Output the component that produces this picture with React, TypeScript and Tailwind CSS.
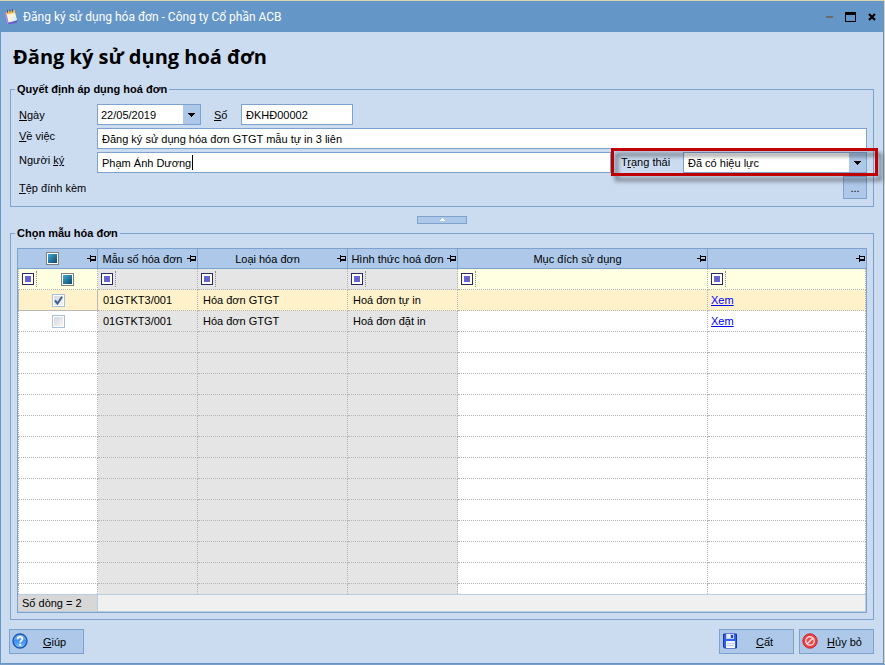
import { useState, type ReactNode } from "react";

const COLUMNS = [
  { title: "Mẫu số hóa đơn", width: "w-[100px]", readOnly: true },
  { title: "Loại hóa đơn", width: "w-[150px]", readOnly: true },
  { title: "Hình thức hoá đơn", width: "w-[110px]", readOnly: true },
  { title: "Mục đích sử dụng", width: "w-[250px]", readOnly: false },
  { title: "", width: "", readOnly: false },
];

const ROWS = [
  { code: "01GTKT3/001", type: "Hóa đơn GTGT", form: "Hoá đơn tự in", purpose: "" },
  { code: "01GTKT3/001", type: "Hóa đơn GTGT", form: "Hoá đơn đặt in", purpose: "" },
];

const EMPTY_ROWS = 12;

const FIELD = "h-[21px] border border-[#7da2ce] bg-white px-1 outline-none";
const CELL = "border-r border-b border-dotted border-[#b4b4b4]";

function AppIcon() {
  return (
    <svg width="16" height="16" viewBox="0 0 16 16" aria-hidden="true">
      <path d="M0 4l3-1.500 3 11L14 11l-1.500 3L3 15.500z" fill="#6a5fd0" />
      <path d="M0 4l2-.5 2.500 11-1.500 1z" fill="#9a92ea" />
      <path d="M2 3l8.500-1.500L13 11l-8.500 2.500z" fill="#fdf3d6" />
      <path d="M2 3l8.500-1.500.6 2.500-8.500 1.500z" fill="#f4c45c" />
      <path d="M7 8l4.500-1 1 4-4.500 1.500z" fill="#dff1fb" />
      <path d="M3.500 1v3M6 .6v3M8.500 .2v3" stroke="#5b5a57" strokeWidth="1" />
    </svg>
  );
}

function HelpIcon() {
  return (
    <svg width="16" height="16" viewBox="0 0 16 16" aria-hidden="true">
      <defs>
        <linearGradient id="help" x1="0" y1="0" x2="0" y2="1">
          <stop offset="0" stopColor="#8cc4fb" />
          <stop offset="0.5" stopColor="#3d8df0" />
          <stop offset="1" stopColor="#7cc2ff" />
        </linearGradient>
      </defs>
      <circle cx="8" cy="8" r="7" fill="url(#help)" stroke="#1c56a8" strokeWidth="1.3" />
      <path d="M5.600 6.200C5.600 3 10.600 3.200 10.400 6.100C10.300 7.700 8.200 7.700 8.200 9.600" fill="none" stroke="#fff" strokeWidth="1.8" />
      <rect x="7.200" y="10.800" width="2" height="2" fill="#fff" />
    </svg>
  );
}

function SaveIcon() {
  return (
    <svg width="16" height="16" viewBox="0 0 16 16" aria-hidden="true">
      <path d="M1.500 1h13v14h-12l-1-1z" fill="#2f62ea" stroke="#1536b4" />
      <rect x="4" y="1" width="8" height="5" fill="#c3cbe0" />
      <rect x="5" y="1" width="3" height="4" fill="#e8ecf6" />
      <rect x="9" y="2" width="2" height="3" fill="#1c45cc" />
      <rect x="4" y="8" width="9" height="7" fill="#f4f7ff" />
      <path d="M5 10.500h7M5 12.500h7" stroke="#b9c9f2" />
    </svg>
  );
}

function CancelIcon() {
  return (
    <svg width="16" height="16" viewBox="0 0 16 16" aria-hidden="true">
      <circle cx="8" cy="8" r="7.200" fill="#ee3f45" stroke="#c9262d" />
      <circle cx="8" cy="8" r="4.200" fill="#e8484d" stroke="#fbdcdc" strokeWidth="1.400" />
      <path d="M5.200 10.800l5.600-5.600" stroke="#fbdcdc" strokeWidth="1.600" />
    </svg>
  );
}

function PinIcon() {
  return (
    <svg className="shrink-0" width="10" height="8" viewBox="0 0 10 8" shapeRendering="crispEdges" aria-hidden="true">
      <path d="M0 3h3v1H0zM3 0h1v7H3zM4 1h5v1H4zM8 1h1v5H8zM4 4h5v2H4z" fill="#000" />
    </svg>
  );
}

function DownArrow() {
  return (
    <svg width="7" height="4" viewBox="0 0 7 4" shapeRendering="crispEdges" aria-hidden="true">
      <path d="M0 0h7v1H0zM1 1h5v1H1zM2 2h3v1H2zM3 3h1v1H3z" fill="#000" />
    </svg>
  );
}

function FilterButton() {
  return (
    <div className="flex h-4 shrink-0 items-center border-r border-dotted border-[#8c8c8c] pr-0.5">
      <button type="button" aria-label="Lọc" className="flex size-3 items-center justify-center border border-[#2a2a60] bg-white">
        <span className="size-1.5 bg-[#6565cf]" />
      </button>
    </div>
  );
}

function TriStateBox({ label }: { label: string }) {
  return (
    <input
      type="checkbox"
      aria-label={label}
      className="size-[13px] appearance-none border border-[#808080] bg-linear-to-br from-[#45b7dc] to-[#0c3f68] outline-1 -outline-offset-2 outline-white"
    />
  );
}

function ActionButton({ icon, children }: { icon: ReactNode; children: ReactNode }) {
  return (
    <button type="button" className="flex h-[25px] w-[75px] items-center border border-[#7da2ce] bg-[#adc8e8] px-0.5 pb-px">
      {icon}
      <span className="flex-1 pt-0.5 text-center">{children}</span>
    </button>
  );
}

export default function App() {
  const [checked, setChecked] = useState([true, false]);
  const [signer, setSigner] = useState("Phạm Ánh Dương");
  const [status, setStatus] = useState("active");

  const toggle = (index: number) =>
    setChecked((prev) => prev.map((value, i) => (i === index ? !value : value)));

  return (
    <div className="flex min-h-screen flex-col overflow-hidden bg-[#7b9fcb] pb-px font-['Liberation_Sans',sans-serif] text-[11px] leading-4 text-black">
      <div className="h-px bg-[#dcd3ae]" />
      <main className="flex flex-1 flex-col border-r border-[#d8d2bc]">
        {/* Title bar */}
        <header className="flex h-[31px] shrink-0 items-center bg-[#6496c8] pr-2 pl-1 text-white">
          <AppIcon />
          <span className="ml-[3px] flex-1 font-['Roboto',sans-serif] text-xs">
            Đăng ký sử dụng hóa đơn - Công ty Cổ phần ACB
          </span>
          <div className="flex items-center gap-3">
            <button type="button" aria-label="Thu nhỏ" className="h-0.5 w-[7px] bg-[#6b6b6b]" />
            <button type="button" aria-label="Phóng to" className="h-2.5 w-[11px] border border-t-3 border-black" />
            <button type="button" aria-label="Đóng">
              <svg width="8" height="8" viewBox="0 0 8 8">
                <path d="M1 1l6 6M7 1L1 7" stroke="#000" strokeWidth="2.200" />
              </svg>
            </button>
          </div>
        </header>

        <div className="flex-1 border-x border-b border-[#6496c8] bg-[#cbdcf1] px-[9px] pb-[9px]">
          <h1 className="flex h-[50px] items-center pl-[3px] font-['Open_Sans',sans-serif] text-xl font-bold">
            Đăng ký sử dụng hoá đơn
          </h1>

          <fieldset className="border border-[#7da2ce] pt-[7px] pr-1.5 pb-[7px] pl-2">
            <legend className="-ml-1 px-0.5 leading-[15px] font-bold">Quyết định áp dụng hoá đơn</legend>
            <div className="grid grid-cols-[78px_1fr] gap-y-[3px]">
              <label htmlFor="date" className="self-center"><u>N</u>gày</label>
              <div className="flex items-center">
                <div className="flex h-[21px] w-[104px] border border-[#7da2ce] bg-white">
                  <input id="date" defaultValue="22/05/2019" className="min-w-0 flex-1 pl-[3px] outline-none" />
                  <button type="button" aria-label="Chọn ngày" className="flex w-[17px] items-center justify-center bg-[#adc8e8]">
                    <DownArrow />
                  </button>
                </div>
                <label htmlFor="number" className="w-10 pl-[13px]"><u>S</u>ố</label>
                <input id="number" defaultValue="ĐKHĐ00002" className={`${FIELD} w-[112px]`} />
              </div>

              <label htmlFor="subject"><u>V</u>ề việc</label>
              <input id="subject" defaultValue="Đăng ký sử dụng hóa đơn GTGT mẫu tự in 3 liên" className={FIELD} />

              <label htmlFor="signer">Người <u>ký</u></label>
              <div className="flex">
                <div className="relative flex flex-1">
                  <input id="signer" value={signer} onChange={(e) => setSigner(e.target.value)} className={`${FIELD} flex-1`} />
                  <span className="absolute top-[3px] left-[95px] h-[15px] w-px bg-black" />
                </div>
                <div className="relative flex w-[256px] pl-2.5">
                  <label htmlFor="status" className="w-[62px] pt-0.5">T<u>r</u>ạng thái</label>
                  <div className="relative flex flex-1">
                    <select id="status" value={status} onChange={(e) => setStatus(e.target.value)} className={`${FIELD} flex-1 appearance-none`}>
                      <option value="active">Đã có hiệu lực</option>
                      <option value="inactive">Chưa có hiệu lực</option>
                    </select>
                    <span className="pointer-events-none absolute inset-y-px right-px flex w-[17px] items-center justify-center bg-[#adc8e8]">
                      <DownArrow />
                    </span>
                  </div>
                  <div className="pointer-events-none absolute -top-1 -right-[11px] -bottom-[3px] left-0 border-3 border-[#c00000] drop-shadow-[4px_5px_2px_rgba(0,0,0,0.5)]" />
                </div>
              </div>

              <label htmlFor="attach" className="self-center"><u>T</u>ệp đính kèm</label>
              <button id="attach" type="button" className="h-[23px] w-6 justify-self-end border border-[#7da2ce] bg-[#adc8e8]">
                ...
              </button>
            </div>
          </fieldset>

          <div className="flex h-[19px] items-center justify-center pt-[7px] pb-px">
            <button type="button" aria-label="Thu gọn" className="flex h-2 w-[50px] items-center justify-center border border-[#7da2ce] bg-[#adc8e8]">
              <svg width="5" height="3" viewBox="0 0 5 3" shapeRendering="crispEdges">
                <path d="M2 0h1v1H2zM1 1h3v1H1zM0 2h5v1H0z" fill="#fff" />
              </svg>
            </button>
          </div>

          <fieldset className="min-w-0 border border-[#7da2ce] px-1.5 pt-[7px] pb-1.5">
            <legend className="-ml-0.5 px-0.5 leading-[15px] font-bold">Chọn mẫu hóa đơn</legend>
            <div className="border border-[#7da2ce] bg-white">
              <table className="w-full table-fixed border-separate border-spacing-0">
                <colgroup>
                  <col className="w-[80px]" />
                  {COLUMNS.map((col) => <col key={col.title} className={col.width} />)}
                </colgroup>
                <thead>
                  <tr className="h-5 bg-[#adc8e8]">
                    <th className="border-r border-b border-[#7da2ce] p-0">
                      <div className="flex items-center">
                        <span className="flex flex-1 justify-center"><TriStateBox label="Chọn tất cả" /></span>
                        <PinIcon />
                      </div>
                    </th>
                    {COLUMNS.map((col) => (
                      <th key={col.title} className="border-r border-b border-[#7da2ce] p-0 font-normal last:border-r-0">
                        <div className="flex items-center">
                          <span className="flex-1 text-center whitespace-nowrap">{col.title}</span>
                          <PinIcon />
                        </div>
                      </th>
                    ))}
                  </tr>
                </thead>
                <tbody>
                  {/* Filter row */}
                  <tr className="h-[21px]">
                    <td className={`${CELL} border-l bg-[#ffffe1] p-0`}>
                      <div className="flex items-center pl-[3px]">
                        <FilterButton />
                        <span className="flex flex-1 justify-center"><TriStateBox label="Lọc đã chọn" /></span>
                      </div>
                    </td>
                    {COLUMNS.map((col) => (
                      <td key={col.title} className={`${CELL} p-0 pl-[3px] ${col.readOnly ? "bg-[#e5e5e5]" : "bg-[#ffffe1]"}`}>
                        <div className="flex"><FilterButton /></div>
                      </td>
                    ))}
                  </tr>

                  {ROWS.map((row, i) => {
                    const active = i === 0;
                    const locked = active ? "bg-[#fff2cb]" : "bg-[#e5e5e5]";
                    const open = active ? "bg-[#fff2cb]" : "bg-white";
                    return (
                      <tr key={row.form} className="h-[21px]">
                        <td className={`p-0 ${open} ${active ? "border-r border-b border-l border-[#b9b9b9]" : `${CELL} border-l`}`}>
                          <input
                            type="checkbox"
                            aria-label={row.form}
                            checked={checked[i]}
                            onChange={() => toggle(i)}
                            className="sr-only"
                            id={`row-${i}`}
                          />
                          <label htmlFor={`row-${i}`} className="mx-auto flex size-[13px] items-center justify-center border border-[#a9bfdf] bg-linear-to-br from-[#cfd3d9] to-[#f8f8f8] outline-1 -outline-offset-2 outline-white">
                            {checked[i] && (
                              <svg width="9" height="9" viewBox="0 0 9 9">
                                <path d="M1 4.500l2.500 3L8 .8" fill="none" stroke="#3f5c93" strokeWidth="2" />
                              </svg>
                            )}
                          </label>
                        </td>
                        <td className={`${CELL} p-0 pl-[5px] ${locked}`}>{row.code}</td>
                        <td className={`${CELL} p-0 pl-[5px] ${locked}`}>{row.type}</td>
                        <td className={`${CELL} p-0 pl-[5px] ${locked}`}>{row.form}</td>
                        <td className={`${CELL} p-0 pl-[5px] ${open}`}>{row.purpose}</td>
                        <td className={`${CELL} p-0 pl-[3px] ${open}`}>
                          <a href="#xem" className="text-[#0000ff] underline">Xem</a>
                        </td>
                      </tr>
                    );
                  })}

                  {Array.from({ length: EMPTY_ROWS }, (_, i) => (
                    <tr key={i} className="h-[21px]">
                      <td className={`${CELL} border-l p-0`} />
                      {COLUMNS.map((col) => (
                        <td key={col.title} className={`${CELL} p-0 ${col.readOnly ? "bg-[#e5e5e5]" : "bg-white"}`} />
                      ))}
                    </tr>
                  ))}
                  <tr className="h-2.5">
                    <td className="border-x border-dotted border-[#b4b4b4] p-0" />
                    {COLUMNS.map((col) => (
                      <td key={col.title} className={`border-r border-dotted border-[#b4b4b4] p-0 ${col.readOnly ? "bg-[#e5e5e5]" : "bg-white"}`} />
                    ))}
                  </tr>
                </tbody>
                <tfoot>
                  <tr className="h-[18px]">
                    <td className="border border-l-0 border-[#b9cde0] bg-[#d7d7d7] p-0 pl-1">Số dòng = 2</td>
                    <td colSpan={5} className="border border-l-0 border-[#b9cde0] bg-[#f0f0f0] p-0" />
                  </tr>
                </tfoot>
              </table>
            </div>
          </fieldset>

          {/* Actions */}
          <footer className="-ml-px flex gap-[5px] pt-[9px]">
            <ActionButton icon={<HelpIcon />}><u>G</u>iúp</ActionButton>
            <span className="flex-1" />
            <ActionButton icon={<SaveIcon />}><u>C</u>ất</ActionButton>
            <ActionButton icon={<CancelIcon />}><u>H</u>ủy bỏ</ActionButton>
          </footer>
        </div>
      </main>
    </div>
  );
}
